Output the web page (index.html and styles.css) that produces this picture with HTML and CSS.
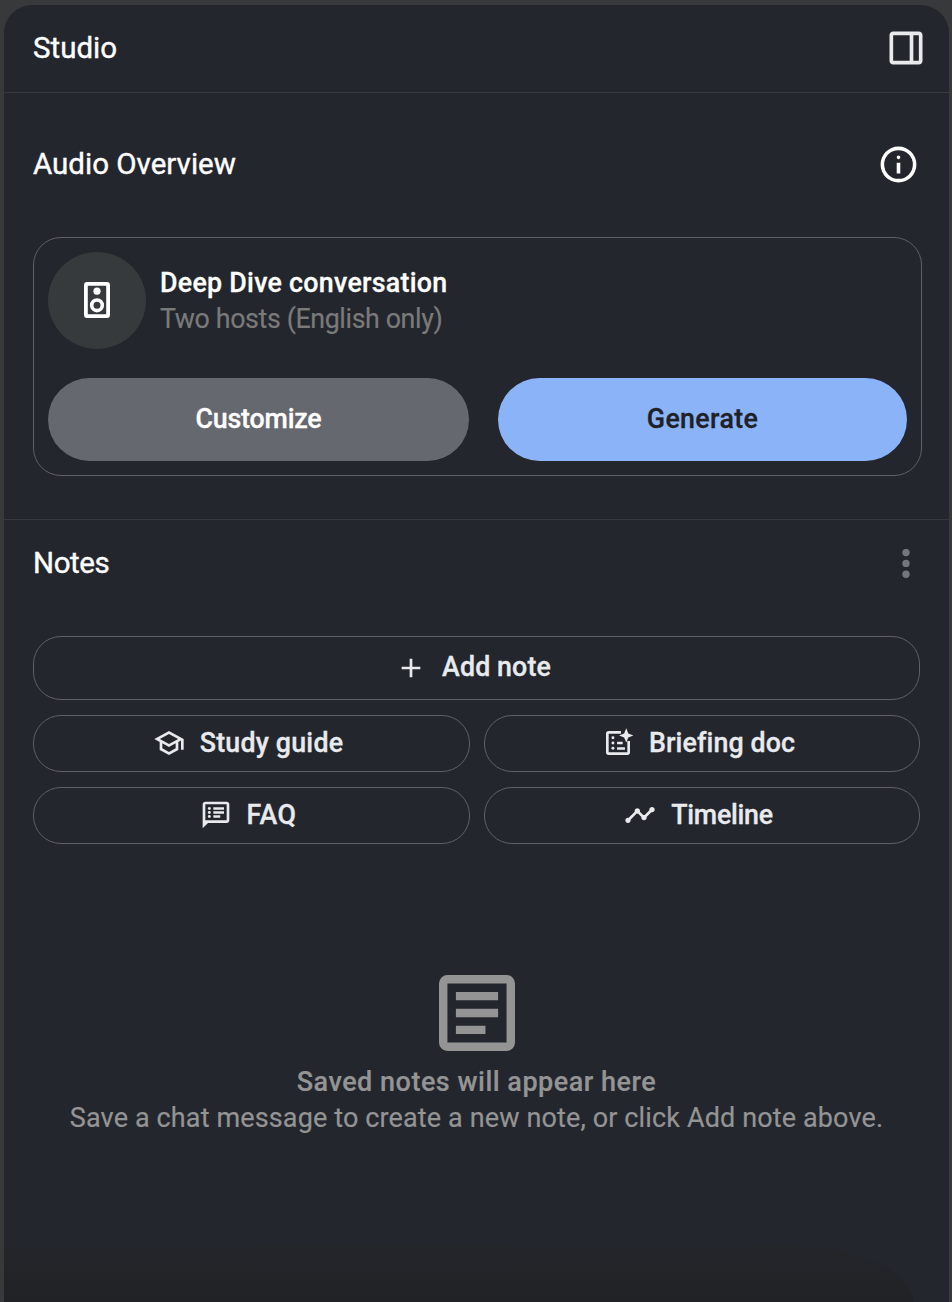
FILE: index.html
```html
<!DOCTYPE html>
<html lang="en">
<head>
    <meta charset="UTF-8">
    <meta name="viewport" content="width=device-width, initial-scale=1.0">
    <title>Studio</title>
    <link rel="stylesheet" href="styles.css">
</head>
<body>
    <div class="panel">
        <header class="panel-header">
            <h1>Studio</h1>
            <svg class="icon-panel" viewBox="0 0 24 24"><path d="M5 21q-.825 0-1.412-.587T3 19V5q0-.825.588-1.412T5 3h14q.825 0 1.413.588T21 5v14q0 .825-.587 1.413T19 21zm11-2h3V5h-3zm-2 0V5H5v14z"/></svg>
        </header>

        <section class="audio">
            <div class="audio-title">
                <h2>Audio Overview</h2>
                <svg class="icon-info" viewBox="0 0 24 24"><path d="M11 17h2v-6h-2zm1-8q.425 0 .713-.288T13 8t-.288-.712T12 7t-.712.288T11 8t.288.713T12 9m0 13q-2.075 0-3.9-.788t-3.175-2.137T2.788 15.9 2 12t.788-3.9 2.137-3.175T8.1 2.788 12 2t3.9.788 3.175 2.137T21.213 8.1 22 12t-.788 3.9-2.137 3.175-3.175 2.138T12 22m0-2q3.35 0 5.675-2.325T20 12t-2.325-5.675T12 4 6.325 6.325 4 12t2.325 5.675T12 20"/></svg>
            </div>
            <div class="audio-card">
                <div class="audio-info">
                    <div class="audio-avatar">
                        <svg viewBox="0 0 26 36"><path fill-rule="evenodd" d="M3 0h20a3 3 0 0 1 3 3v30a3 3 0 0 1-3 3H3a3 3 0 0 1-3-3V3a3 3 0 0 1 3-3zm.8 3.8v28.4h18.4V3.8z"/><circle cx="13" cy="9.2" r="3.6"/><circle class="ring" cx="13" cy="23.3" r="5.3"/></svg>
                    </div>
                    <div>
                        <p class="audio-name">Deep Dive conversation</p>
                        <p class="audio-hosts">Two hosts (English only)</p>
                    </div>
                </div>
                <div class="audio-actions">
                    <button class="btn-customize">Customize</button>
                    <button class="btn-generate">Generate</button>
                </div>
            </div>
        </section>

        <section class="notes">
            <div class="notes-title">
                <h2>Notes</h2>
                <svg class="icon-more" viewBox="0 0 8 30"><circle cx="4" cy="3.6" r="3.7"/><circle cx="4" cy="14.4" r="3.7"/><circle cx="4" cy="25.2" r="3.7"/></svg>
            </div>
            <div class="notes-buttons">
                <button class="btn-note btn-add">
                    <svg viewBox="0 0 24 24"><path d="M11 13H5v-2h6V5h2v6h6v2h-6v6h-2z"/></svg>
                    <span class="label-add">Add note</span>
                </button>
                <button class="btn-note">
                    <svg viewBox="0 0 24 24"><path d="m12 21-7-3.8v-6L1 9l11-6 11 6v8h-2v-6.9l-2 1.1v6zm0-8.3L18.85 9 12 5.3 5.15 9zm0 6.025 5-2.7V12.25L12 15l-5-2.75v3.775z"/></svg>
                    <span class="label-study">Study guide</span>
                </button>
                <button class="btn-note">
                    <svg viewBox="0 0 24 24"><path fill-rule="evenodd" d="M5 3h9.2v2H5v14h14v-8.5h2V19a2 2 0 0 1-2 2H5a2 2 0 0 1-2-2V5a2 2 0 0 1 2-2z"/><path d="m18.2 1 1.5 3.8 3.8 1.5-3.8 1.5-1.5 3.9-1.6-3.9-3.8-1.5 3.8-1.5zM11.3 11.1h4.2V13h-4.2zM11.3 15.1h5.9V17h-5.9z"/><circle cx="8.2" cy="8" r="1.1"/><circle cx="8.2" cy="12" r="1.1"/><circle cx="8.2" cy="16" r="1.1"/></svg>
                    <span class="label-briefing">Briefing doc</span>
                </button>
                <button class="btn-note">
                    <svg viewBox="0 0 24 24"><path fill-rule="evenodd" d="M2 22V4q0-.825.588-1.412T4 2h16q.825 0 1.413.588T22 4v12q0 .825-.587 1.413T20 18H6zm2-6h16V4H4z"/><path d="M10 6.1h8V8h-8zM10 9.1h8V11h-8zM10 12.1h5.2V14H10z"/><circle cx="7" cy="7.1" r="1.1"/><circle cx="7" cy="10.1" r="1.1"/><circle cx="7" cy="13.1" r="1.1"/></svg>
                    <span class="label-faq">FAQ</span>
                </button>
                <button class="btn-note">
                    <svg viewBox="0 0 24 24"><path d="M3 18q-.825 0-1.412-.587T1 16t.588-1.412T3 14h.263q.112 0 .237.05L8.05 9.5Q8 9.375 8 9.263V9q0-.825.588-1.412T10 7t1.413.588T12 9q0 .05-.05.5l2.55 2.55q.125-.05.238-.05h.525q.112 0 .237.05l3.55-3.55q-.05-.125-.05-.237V8q0-.825.588-1.412T21 6t1.413.588T23 8t-.587 1.413T21 10h-.262q-.113 0-.238-.05l-3.55 3.55q.05.125.05.238V14q0 .825-.587 1.413T15 16t-1.412-.587T13 14v-.262q0-.113.05-.238l-2.55-2.55q-.125.05-.237.05H10q-.05 0-.5-.05L4.95 15.5q.05.125.05.238V16q0 .825-.587 1.413T3 18"/></svg>
                    <span class="label-timeline">Timeline</span>
                </button>
            </div>
            <div class="empty">
                <svg viewBox="0 0 18 18"><path fill-rule="evenodd" d="M2 0h14q.825 0 1.413.588T18 2v14q0 .825-.587 1.413T16 18H2q-.825 0-1.412-.587T0 16V2Q0 1.175.588.588T2 0zm0 2v14h14V2zM4 4h10v2H4zM4 8h10v2H4zM4 12h7v2H4z"/></svg>
                <p class="empty-title">Saved notes will appear here</p>
                <p class="empty-text">Save a chat message to create a new note, or click Add note above.</p>
            </div>
        </section>
    </div>
</body>
</html>
```

FILE: styles.css
```css
* {
    box-sizing: border-box;
}

body {
    font-family: Roboto, "Open Sans", sans-serif;
    background-color: #38393b;
    margin: 0;
    padding: 5px 3px 0 4px;
    height: 1302px;
    overflow: hidden;
    color: #fff;
}

h1, h2, p {
    margin: 0;
    font-weight: 400;
}

h1, h2 {
    font-size: 29.5px;
    line-height: 36px;
    -webkit-text-stroke: 0.4px #fff;
}

svg {
    display: block;
    flex: none;
    fill: currentColor;
}

button {
    font-family: inherit;
    font-size: 26.8px;
    font-weight: 500;
    line-height: 36px;
    border: none;
    cursor: pointer;
    -webkit-text-stroke: 0.3px currentColor;
}

.panel {
    position: relative;
    height: 1297px;
    background-color: #23262d;
    border-radius: 28px 28px 0 0;
    overflow: hidden;
}

/* soft shade at the bottom of the panel */
.panel::after {
    content: "";
    position: absolute;
    left: 0;
    right: 36px;
    bottom: 0;
    height: 57px;
    border-top-right-radius: 130px 57px;
    background: linear-gradient(#23262a, #202226);
}

.panel-header {
    height: 88px;
    display: flex;
    align-items: center;
    justify-content: space-between;
    padding: 0 21px 1px 29px;
    border-bottom: 1px solid #37393c;
}

.icon-panel {
    width: 44px;
    height: 44px;
    color: #e8eaed;
}

.audio {
    height: 427px;
    padding: 49px 27px 0 29px;
    border-bottom: 1px solid #37393c;
}

.audio-title {
    display: flex;
    align-items: center;
    justify-content: space-between;
    height: 44px;
    margin-bottom: 51px;
}

.icon-info {
    width: 43px;
    height: 43px;
    margin: 1px 2px 0 0;
}

.audio-card {
    height: 239px;
    padding: 14px;
    border: 1px solid #5f6163;
    border-radius: 28px;
}

.audio-info {
    display: flex;
    align-items: center;
    gap: 14px;
    height: 97px;
    margin-bottom: 29px;
    font-size: 26.8px;
    line-height: 36px;
}

.audio-avatar {
    display: flex;
    align-items: center;
    justify-content: center;
    width: 98px;
    height: 97px;
    padding-bottom: 1px;
    border-radius: 50%;
    background-color: #373a3c;
}

.audio-avatar svg {
    width: 26px;
    height: 36px;
}

.ring {
    fill: none;
    stroke: currentColor;
    stroke-width: 3.6;
}

.audio-name {
    font-weight: 500;
    letter-spacing: 0.27px;
    -webkit-text-stroke: 0.3px currentColor;
}

.audio-hosts {
    color: #7a7a7a;
    letter-spacing: -0.38px;
    -webkit-text-stroke: 0.2px currentColor;
}

.audio-actions {
    display: grid;
    grid-template-columns: 421px 409px;
    justify-content: space-between;
    height: 83px;
}

.audio-actions button {
    border-radius: 42px;
    padding: 0 0 2px;
}

.btn-customize {
    background-color: #666870;
    color: #fff;
    letter-spacing: -0.2px;
}

.btn-generate {
    background-color: #8bb3f8;
    color: #202124;
    letter-spacing: 0.35px;
}

.notes {
    padding: 25px 29px 0;
}

.notes-title {
    display: flex;
    justify-content: space-between;
    height: 91px;
    letter-spacing: -0.4px;
}

.icon-more {
    width: 8px;
    height: 30px;
    margin: 4px 10px 0 0;
    color: #73767a;
}

.notes-buttons {
    display: grid;
    grid-template-columns: 437px 436px;
    grid-template-rows: 64px 57px 57px;
    gap: 15px 14px;
}

.btn-note {
    display: flex;
    align-items: center;
    justify-content: center;
    gap: 15px;
    padding: 0 7px 1px 0;
    background: none;
    color: #e8eaed;
    border: 1px solid #5f6163;
    border-radius: 28px;
    letter-spacing: 0.1px;
}

.btn-note svg {
    width: 32px;
    height: 32px;
}

.btn-note span {
    padding-bottom: 1px;
}

.btn-add {
    grid-column: 1 / 3;
}

.label-study {
    letter-spacing: 0.2px;
}

.label-faq {
    letter-spacing: 0.5px;
}

.label-timeline {
    letter-spacing: -0.3px;
}

.empty {
    margin-top: 131px;
    font-size: 27px;
    line-height: 36px;
    color: #949494;
    text-align: center;
}

.empty svg {
    width: 76px;
    height: 76px;
    margin: 0 auto 13px;
}

.empty-title {
    font-weight: 500;
    letter-spacing: 0.5px;
    -webkit-text-stroke: 0.2px currentColor;
}

.empty-text {
    white-space: nowrap;
    letter-spacing: 0.13px;
    -webkit-text-stroke: 0.2px currentColor;
}
```
